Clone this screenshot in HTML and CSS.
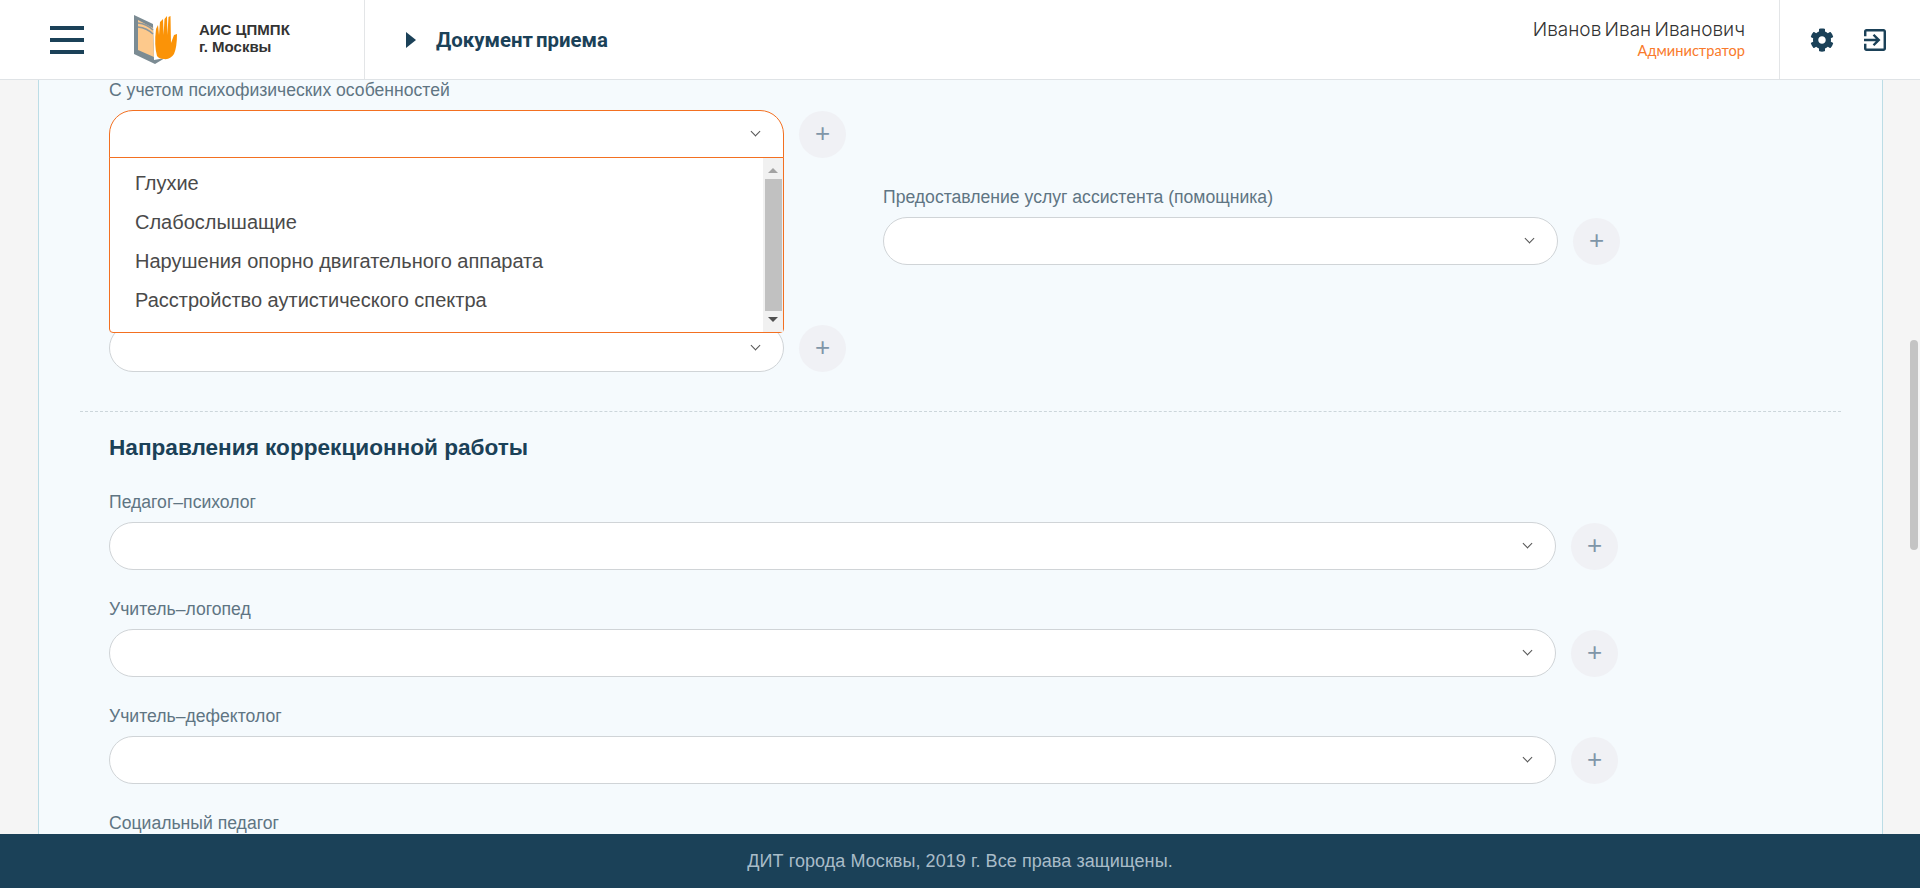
FILE: index.html
```html
<!DOCTYPE html>
<html lang="ru">
  <head>
    <meta charset="UTF-8" />
    <meta name="viewport" content="width=device-width, initial-scale=1.0" />
    <title>Документ приема</title>
    <link rel="stylesheet" href="styles.css">
  </head>
  <body>
    <header class="topbar">
      <div class="brand">
        <button class="burger" type="button" aria-label="Меню"><span></span><span></span><span></span></button>
        <svg class="logo" viewBox="0 0 44 50" width="44" height="50" aria-hidden="true">
          <path d="M0 0 L19 9 L20 45 L31 43 L21 49 L0 39 Z" fill="#7b8b93" />
          <path d="M4 5 L19 13 L20 42 L4 35 Z" fill="#fdc98c" />
          <path d="M4 8 Q13 9 19 15 M4 12 Q13 13 19 19" fill="none" stroke="#8d979b" stroke-width="1.6" />
          <path d="M23 41 Q20 30 22 14 L24 10 L25 20 L26 7 L29 4 L29.6 20 L30.5 4 L33 1 L33.4 20 L34.5 2 L36.5 1 L37 28 L40 20 L43 19 Q43 32 40 39 Q36 45 30 44 Q25 44 23 41 Z" fill="#fb9307" />
        </svg>
        <div class="brand-name">АИС ЦПМПК<br />г. Москвы</div>
      </div>
      <div class="crumb">
        <span class="crumb-arrow"></span>
        <span class="crumb-title">Документ приема</span>
      </div>
      <div class="user">
        <div class="user-name">Иванов Иван Иванович</div>
        <div class="user-role">Администратор</div>
      </div>
      <div class="actions">
        <svg viewBox="0 0 512 512" width="24" height="24" aria-hidden="true"><path d="M487.4 315.7l-42.6-24.6c4.3-23.2 4.3-47 0-70.2l42.6-24.6c4.9-2.8 7.1-8.6 5.5-14-11.1-35.6-30-67.8-54.7-94.6-3.8-4.1-10-5.1-14.8-2.3L380.8 110c-17.9-15.4-38.5-27.3-60.8-35.1V25.8c0-5.6-3.9-10.5-9.4-11.7-36.7-8.2-74.3-7.8-109.2 0-5.5 1.2-9.4 6.1-9.4 11.7V75c-22.2 7.9-42.8 19.8-60.8 35.1L88.7 85.5c-4.9-2.8-11-1.9-14.8 2.3-24.7 26.7-43.6 58.9-54.7 94.6-1.7 5.4.6 11.2 5.5 14L67.3 221c-4.3 23.2-4.3 47 0 70.2l-42.6 24.6c-4.9 2.8-7.1 8.6-5.5 14 11.1 35.6 30 67.8 54.7 94.6 3.8 4.1 10 5.1 14.8 2.3l42.6-24.6c17.9 15.4 38.5 27.3 60.8 35.1v49.2c0 5.6 3.9 10.5 9.4 11.7 36.7 8.2 74.3 7.8 109.2 0 5.5-1.2 9.4-6.1 9.4-11.7v-49.2c22.2-7.9 42.8-19.8 60.8-35.1l42.6 24.6c4.9 2.8 11 1.9 14.8-2.3 24.7-26.7 43.6-58.9 54.7-94.6 1.5-5.5-.7-11.3-5.6-14.1zM256 336c-44.1 0-80-35.9-80-80s35.9-80 80-80 80 35.9 80 80-35.9 80-80 80z" /></svg>
        <svg viewBox="3 3 18 18" width="22" height="22" aria-hidden="true"><path d="M10.09 15.59L11.5 17l5-5-5-5-1.41 1.41L12.67 11H3v2h9.67l-2.58 2.59zM19 3H5c-1.11 0-2 .9-2 2v4h2V5h14v14H5v-4H3v4c0 1.1.89 2 2 2h14c1.1 0 2-.9 2-2V5c0-1.1-.9-2-2-2z" /></svg>
      </div>
    </header>

    <main class="content">
      <div class="panel">
        <section class="columns">
          <div class="column">
            <div class="field">
              <label>С учетом психофизических особенностей</label>
              <div class="control">
                <div class="select select-open"><span class="chevron"></span></div>
                <button class="add" type="button">+</button>
                <div class="dropdown">
                  <ul class="options">
                    <li>Глухие</li>
                    <li>Слабослышащие</li>
                    <li>Нарушения опорно двигательного аппарата</li>
                    <li>Расстройство аутистического спектра</li>
                  </ul>
                  <div class="list-scroll">
                    <span class="arrow-up"></span>
                    <span class="list-thumb"></span>
                    <span class="arrow-down"></span>
                  </div>
                </div>
              </div>
            </div>
            <div class="field-spacer"></div>
            <div class="field">
              <label>&nbsp;</label>
              <div class="control">
                <div class="select"><span class="chevron"></span></div>
                <button class="add" type="button">+</button>
              </div>
            </div>
          </div>
          <div class="column column-right">
            <div class="field">
              <label>Предоставление услуг ассистента (помощника)</label>
              <div class="control">
                <div class="select"><span class="chevron"></span></div>
                <button class="add" type="button">+</button>
              </div>
            </div>
          </div>
        </section>

        <section class="directions">
          <h2>Направления коррекционной работы</h2>
          <div class="field">
            <label>Педагог–психолог</label>
            <div class="control">
              <div class="select"><span class="chevron"></span></div>
              <button class="add" type="button">+</button>
            </div>
          </div>
          <div class="field">
            <label>Учитель–логопед</label>
            <div class="control">
              <div class="select"><span class="chevron"></span></div>
              <button class="add" type="button">+</button>
            </div>
          </div>
          <div class="field">
            <label>Учитель–дефектолог</label>
            <div class="control">
              <div class="select"><span class="chevron"></span></div>
              <button class="add" type="button">+</button>
            </div>
          </div>
          <div class="field">
            <label>Социальный педагог</label>
          </div>
        </section>
      </div>
      <div class="page-thumb"></div>
    </main>

    <footer class="footer">ДИТ города Москвы, 2019 г. Все права защищены.</footer>
  </body>
</html>
```

FILE: styles.css
```css
* {
  box-sizing: border-box;
}
html,
body {
  height: 100%;
}
body {
  margin: 0;
  display: flex;
  flex-direction: column;
  overflow: hidden;
  font-family: "Liberation Sans", Arial, sans-serif;
  background: #f5f5f5;
}

/* header */
.topbar {
  flex: none;
  display: flex;
  align-items: stretch;
  height: 80px;
  background: #fff;
  border-bottom: 1px solid #dfe3e6;
}
.brand {
  display: flex;
  align-items: center;
  width: 365px;
  padding-left: 50px;
  border-right: 1px solid #e3e5e7;
}
.burger {
  display: flex;
  flex-direction: column;
  gap: 8px;
  width: 34px;
  padding: 0;
  border: none;
  background: none;
}
.burger span {
  display: block;
  height: 4px;
  background: #1b4158;
}
.logo {
  margin-left: 50px;
}
.brand-name {
  margin-left: 21px;
  padding-bottom: 3px;
  font-size: 15px;
  line-height: 17px;
  font-weight: bold;
  color: #333;
}
.crumb {
  flex: 1;
  display: flex;
  align-items: center;
  padding-left: 41px;
}
.crumb-arrow {
  width: 0;
  height: 0;
  border-top: 8px solid transparent;
  border-bottom: 8px solid transparent;
  border-left: 10px solid #1b4158;
}
.crumb-title {
  margin-left: 20px;
  font-family: Roboto, sans-serif;
  font-size: 20.4px;
  font-weight: bold;
  color: #1b4158;
  word-spacing: -2px;
}
.user {
  display: flex;
  flex-direction: column;
  align-items: flex-end;
  justify-content: center;
  padding-right: 34px;
  font-family: Inter, sans-serif;
}
.user-name {
  font-size: 19px;
  font-weight: 300;
  line-height: 22px;
  color: #333;
  word-spacing: -2px;
}
.user-role {
  margin-top: 1px;
  font-family: Lato, sans-serif;
  font-size: 14.6px;
  line-height: 18px;
  color: #f97a2b;
}
.actions {
  display: flex;
  align-items: center;
  gap: 30px;
  width: 141px;
  padding-left: 30px;
  border-left: 1px solid #e3e5e7;
}
.actions svg {
  fill: #1b4158;
}

/* main part */
.content {
  flex: 1;
  position: relative;
  min-height: 0;
  overflow: hidden;
  padding: 0 37px 0 38px;
}
.panel {
  min-height: 100%;
  padding: 0 41px;
  background: #f5fafd;
  border-left: 1px solid #bcdde6;
  border-right: 1px solid #bcdde6;
}
.page-thumb {
  position: absolute;
  top: 260px;
  right: 2px;
  width: 8px;
  height: 210px;
  border-radius: 4px;
  background: #c4c4c4;
}
.columns {
  display: flex;
  gap: 37px;
  padding: 0 29px 10px;
  border-bottom: 1px dashed #ccd6db;
}
.column {
  width: 737px;
}
.column-right {
  padding-top: 107px;
}
.field {
  margin-bottom: 29px;
}
.field-spacer {
  height: 107px;
}
.field label {
  display: block;
  height: 20px;
  margin-bottom: 10px;
  font-size: 17.6px;
  line-height: 20px;
  color: #5f7583;
}
.control {
  position: relative;
  display: flex;
  align-items: center;
  gap: 15px;
}
.select {
  position: relative;
  flex: 1;
  height: 48px;
  background: #fff;
  border: 1px solid #d0d4d7;
  border-radius: 24px;
}
.select-open {
  border-color: #f37021;
  border-radius: 24px 24px 0 0;
}
.chevron {
  position: absolute;
  top: 17px;
  right: 24px;
  width: 7px;
  height: 7px;
  border-right: 1.5px solid #555;
  border-bottom: 1.5px solid #555;
  transform: rotate(45deg);
}
.add {
  flex: none;
  width: 47px;
  height: 47px;
  padding: 0 0 3px;
  border: none;
  border-radius: 50%;
  background: #f0f1f5;
  font-family: "Liberation Sans", Arial, sans-serif;
  font-size: 26px;
  line-height: 1;
  color: #8096a8;
}

/* open list */
.dropdown {
  position: absolute;
  z-index: 5;
  top: 47px;
  left: 0;
  display: flex;
  width: 675px;
  height: 176px;
  background: #fff;
  border: 1px solid #f37021;
  border-radius: 0 0 4px 4px;
}
.options {
  flex: 1;
  margin: 0;
  padding: 6px 0 0 25px;
  list-style: none;
  font-size: 20px;
  line-height: 39px;
  color: #4a4a4a;
}
.list-scroll {
  display: flex;
  flex-direction: column;
  align-items: center;
  width: 20px;
  background: #f1f1f1;
}
.list-thumb {
  flex: 1;
  width: 17px;
  margin: 6px 0;
  background: #c1c1c1;
}
.arrow-up,
.arrow-down {
  width: 0;
  height: 0;
  margin-top: 10px;
  border-left: 5px solid transparent;
  border-right: 5px solid transparent;
}
.arrow-up {
  border-bottom: 5px solid #a3a3a3;
}
.arrow-down {
  margin: 0 0 10px;
  border-top: 5px solid #505050;
}

/* section below */
.directions {
  padding: 0 29px;
}
.directions h2 {
  margin: 23px 0 31px;
  font-size: 22.6px;
  line-height: 26px;
  font-weight: bold;
  color: #1b4158;
}
.directions .control {
  width: 1509px;
}

.footer {
  flex: none;
  height: 54px;
  background: #1b4158;
  font-size: 18px;
  line-height: 54px;
  letter-spacing: 0.07px;
  text-align: center;
  color: #a9bcc8;
}
```
